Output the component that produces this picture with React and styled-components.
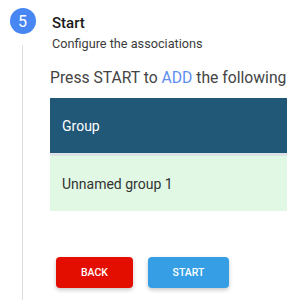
import styled, { createGlobalStyle } from "styled-components";

const GlobalStyle = createGlobalStyle`
  body {
    margin: 0;
    overflow: hidden;
    background: #fff;
    font-family: Roboto, "Liberation Sans", sans-serif;
  }
`;

const Step = styled.div`
  display: flex;
  min-height: 300px;
`;

const Rail = styled.div`
  width: 50px;
  flex-shrink: 0;
  display: flex;
  flex-direction: column;
  align-items: center;
  padding-top: 8px;
  padding-right: 5px;
  box-sizing: border-box;
`;

const Bubble = styled.div`
  width: 26px;
  height: 26px;
  border-radius: 50%;
  background: #4786f3;
  color: #fff;
  font-size: 16px;
  display: flex;
  align-items: center;
  justify-content: center;
`;

const Line = styled.div`
  flex: 1;
  width: 1px;
  margin-top: 11px;
  background: #dedede;
`;

const Content = styled.div`
  flex: 1;
  min-width: 0;
`;

const Title = styled.div`
  margin: 15px 0 0 2px;
  font-size: 15px;
  line-height: 17px;
  font-weight: 500;
  color: #1a1a1a;
`;

const Subtitle = styled.div`
  margin: 4px 0 0 2px;
  font-size: 12.7px;
  line-height: 15px;
  color: #3c3c3c;
`;

const Lead = styled.div`
  margin-top: 17px;
  font-size: 15.7px;
  line-height: 19px;
  color: #444;
  white-space: nowrap;
`;

const Action = styled.span`
  color: #5c8ef2;
`;

const Table = styled.div`
  margin-top: 11px;
  width: 400px;
`;

const Row = styled.div`
  height: 55px;
  display: flex;
  align-items: center;
  padding-left: 12px;
  font-size: 14px;
  color: ${(p) => (p.$head ? "#fff" : "#333")};
  background: ${(p) => (p.$head ? "#215777" : "#e1f9e4")};
  border-bottom: ${(p) => (p.$head ? "3px solid #dde2e6" : "none")};
`;

const Buttons = styled.div`
  display: flex;
  gap: 15px;
  margin: 46px 0 0 6px;
`;

const Button = styled.button`
  width: ${(p) => p.$w}px;
  height: 31px;
  border: none;
  border-radius: 4px;
  background: ${(p) => p.$bg};
  color: #fff;
  font-family: Roboto, "Liberation Sans", sans-serif;
  font-size: 10.5px;
  font-weight: 500;
  box-shadow: 0 2px 4px rgba(0, 0, 0, 0.22);
`;

export default function App() {
  return (
    <>
      <GlobalStyle />
      <Step>
        <Rail>
          <Bubble>5</Bubble>
          <Line />
        </Rail>
        <Content>
          <Title>Start</Title>
          <Subtitle>Configure the associations</Subtitle>
          <Lead>
            Press START to <Action>ADD</Action> the following
          </Lead>
          <Table>
            <Row $head>Group</Row>
            <Row>Unnamed group 1</Row>
          </Table>
          <Buttons>
            <Button $w={77} $bg="#e30d00">BACK</Button>
            <Button $w={81} $bg="#359ee4">START</Button>
          </Buttons>
        </Content>
      </Step>
    </>
  );
}
